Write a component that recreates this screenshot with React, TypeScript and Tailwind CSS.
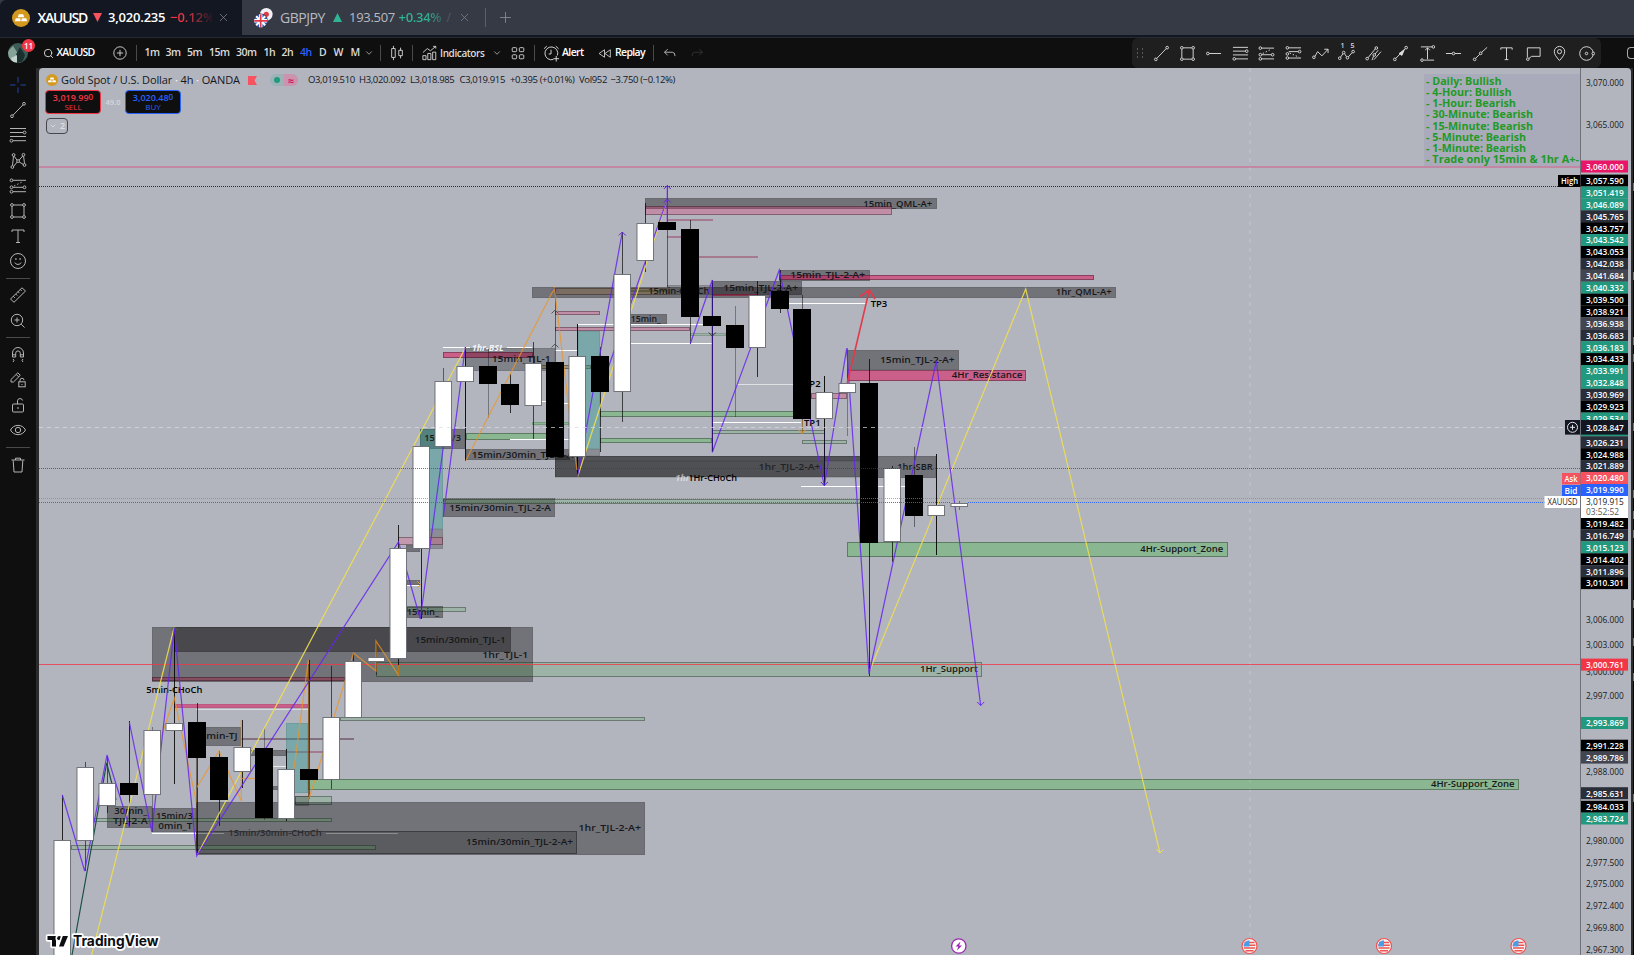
import React from "react";
import { ChevronDown, Search, X, Plus } from "lucide-react";

/* ---------- chart data ---------- */

const GRAY = "rgba(0,0,0,0.36)";
const GREEN = "rgba(70,185,70,0.36)";
const MINT = "rgba(76,175,80,0.2)";
const PINK = "rgba(225,20,90,0.52)";
const ROSE = "rgba(233,30,99,0.26)";
const TEAL = "rgba(38,150,140,0.4)";

type Zone = [number, number, number, number, string, number?];

const zones: Zone[] = [
  [644.5, 198, 936.7, 209, GRAY],
  [644.5, 205.5, 891.5, 214.5, ROSE, 1],
  [667, 218.5, 712.5, 221, ROSE, 1],
  [667, 235.5, 690, 238, ROSE, 1],
  [699, 256, 757.5, 258, ROSE, 1],
  [532.3, 286.5, 1115.7, 298, GRAY],
  [555, 288, 667, 295, "rgba(150,95,40,0.28)", 1],
  [630, 289.5, 667, 291.5, "rgba(60,80,20,0.4)"],
  [667.3, 285, 712, 295, "rgba(0,0,0,0.2)"],
  [712.3, 281, 802.3, 294.7, GRAY],
  [712.3, 293.5, 757, 295, "rgba(160,20,60,0.6)"],
  [779.3, 269.7, 869.7, 281, GRAY],
  [779.3, 274.5, 1093.7, 279.5, PINK, 1],
  [555.3, 310.5, 599.7, 314.5, ROSE, 1],
  [555.3, 327, 690, 330.7, ROSE, 1],
  [630, 314, 667.3, 324, GRAY],
  [443.3, 352.3, 532.7, 357.5, PINK, 1],
  [465.3, 348.3, 555.3, 370.7, "rgba(0,0,0,0.28)"],
  [541, 364.5, 591, 368.5, "rgba(110,90,20,0.35)", 1],
  [577.5, 330.7, 599.7, 449.3, TEAL],
  [585.7, 449, 599.7, 456, "rgba(0,0,0,0.22)"],
  [599.7, 411.3, 794, 417.3, GREEN, 1],
  [712.3, 430.3, 824.7, 433.7, MINT, 1],
  [599.7, 437.7, 712.3, 443, GREEN, 1],
  [690, 332.7, 726, 335.7, MINT, 1],
  [802, 440.3, 847, 444.3, MINT, 1],
  [811, 393.3, 846.7, 399, ROSE, 1],
  [847.3, 370.3, 1026.3, 380.5, PINK, 1],
  [847.3, 350.3, 958.7, 370.3, GRAY],
  [532.3, 421.7, 569, 425.3, GREEN, 1],
  [465.7, 433.3, 546.7, 440, GREEN, 1],
  [420.3, 429.3, 465.3, 449, GRAY],
  [420.3, 429.3, 443.3, 529.3, TEAL],
  [420.3, 529.3, 443.3, 549, "rgba(0,0,0,0.22)"],
  [398.3, 537.3, 443.3, 545, "rgba(233,90,140,0.3)", 1],
  [406, 545, 420.3, 552.3, GRAY],
  [465.7, 449, 570, 460.3, GRAY],
  [555, 456, 936.3, 478.3, GRAY],
  [555, 461, 824, 477, "rgba(0,0,0,0.3)"],
  [555, 456, 861, 461, "rgba(0,0,0,0.28)"],
  [824, 461, 861, 477, "rgba(0,0,0,0.12)"],
  [443.3, 498.3, 555.3, 517, GRAY],
  [443.3, 499.3, 861, 503.7, MINT, 1],
  [846.7, 542.3, 1228, 557.3, GREEN, 1],
  [406.7, 580.3, 420.3, 585.3, GRAY],
  [406.7, 606, 443.3, 618, GRAY],
  [406.7, 607.3, 465.7, 611.7, MINT, 1],
  [174.3, 627.3, 510.7, 651.7, GRAY],
  [152, 627.3, 533, 681.5, GRAY],
  [152, 677.3, 345, 681.3, "rgba(160,20,60,0.4)", 1],
  [376, 662, 981.7, 677.3, MINT, 1],
  [339.7, 717.3, 645, 721.3, MINT, 1],
  [174.3, 704, 308.3, 708, PINK],
  [205.3, 727, 241.3, 746, GRAY],
  [241.3, 738.3, 354, 740.3, "rgba(90,30,60,0.4)"],
  [250, 750.3, 286.3, 756.3, GRAY],
  [286.3, 751.3, 322.7, 753.3, ROSE, 1],
  [286, 723, 308.3, 793.3, TEAL],
  [273, 786, 278, 790, GRAY],
  [308.3, 779.3, 1518.6, 790.3, GREEN, 1],
  [295, 796.3, 331.7, 805.3, MINT, 1],
  [295, 796.3, 308.5, 806, "rgba(0,0,0,0.2)"],
  [196.3, 802, 645, 854.7, GRAY],
  [196.3, 830.5, 577.3, 854, "rgba(0,0,0,0.2)", 1],
  [107.3, 806, 151.8, 827.7, GRAY],
  [152, 808, 196.3, 832.3, GRAY],
  [93.3, 818.3, 331.7, 822.3, MINT, 1],
  [70.7, 845.3, 376, 849.7, MINT, 1],
];

const whiteLines: [number, number, number, number?][] = [
  [443, 470, 347.5], [507, 532, 347.5], [577.5, 704, 324.5], [630.7, 712, 343.5],
  [555, 577.5, 350.5], [541, 555, 401.5], [563, 570, 403.5], [737, 793, 384.5, 0.6],
  [788.7, 867, 303.5], [712.7, 801, 422.5], [510, 569, 439.5], [801, 905, 486.5],
  [555, 861, 477.5, 0.35], [406.7, 420, 585.5], [196, 308, 709.5, 0.5],
  [273, 286, 766.5, 0.7], [152, 196, 833.5], [196, 224, 833.5, 0.3], [326, 398, 833.5, 0.3],
];

/* [x, bodyTop, bodyBottom, up, wickTop, wickBottom, wickAlpha] */
type Candle = [number, number, number, 0 | 1, number, number, number];
const candles: Candle[] = [
  [62, 840, 960, 1, 795, 960, 0.8], [85, 767, 840, 1, 762, 871, 0.6], [107, 783, 805, 1, 756, 813, 0.6],
  [129, 783, 794, 0, 721, 827, 0.8], [152, 730, 794, 1, 727, 832, 0.35], [174, 723, 730, 1, 627, 784, 0.85],
  [197, 722, 757, 0, 703, 855, 0.7], [219, 757, 799, 0, 751, 826, 0.7], [242, 747, 771, 1, 720, 788, 0.8],
  [264, 748, 817, 0, 728, 820, 0.35], [286, 769, 818, 1, 749, 821, 0.8], [309, 769, 779, 0, 660, 799, 0.8],
  [331, 717, 779, 1, 666, 789, 0.6], [353, 661, 717, 1, 653, 717, 0.7], [376, 657, 661, 1, 641, 675, 0.4],
  [398, 548, 658, 1, 525, 675, 0.8], [421, 446, 548, 1, 446, 619, 0.8], [443, 381, 446, 1, 368, 446, 0.5],
  [465, 366, 381, 1, 347, 461, 0.9], [488, 366, 383, 0, 349, 418, 0.35], [510, 384, 404, 0, 374, 413, 0.75],
  [533, 363, 405, 1, 342, 439, 0.65], [555, 362, 456, 0, 288, 457, 0.5], [577, 356, 456, 1, 324, 477, 0.9],
  [600, 356, 391, 0, 347, 452, 0.7], [622, 274, 391, 1, 232, 422, 0.65], [645, 223, 260, 1, 203, 272, 0.7],
  [667, 222, 229, 0, 185, 287, 0.5], [690, 229, 316, 0, 220, 344, 0.6], [712, 316, 325, 0, 280, 452, 0.9],
  [735, 325, 347, 0, 306, 417, 0.35], [757, 295, 347, 1, 281, 377, 0.75], [780, 291, 308, 0, 270, 313, 0.7],
  [802, 309, 418, 0, 295, 433, 0.5], [824, 392, 418, 1, 376, 486, 0.9], [847, 383, 392, 1, 348, 436, 0.35],
  [869, 383, 542, 0, 359, 676, 0.75], [892, 468, 541, 1, 466, 562, 0.7], [914, 475, 515, 0, 447, 527, 0.45],
  [936, 505, 515, 1, 454, 555, 0.9], [959, 503, 506, 1, 501, 510, 0.4],
];

const purple = [
  "62.3,795 84.7,871 107,755 129.3,826.7", "129.3,722 151.8,832 174.3,628 196.7,856 398.5,542 420.3,619 443.3,447",
  "443.3,516.7 465.3,347", "577.5,477 622.3,232", "599.7,392 667.3,199", "667.3,222 667.3,186",
  "690.3,343.7 712.3,280 712.3,452.3 779.3,270 824.3,486 846.7,348.3 869,674 936.3,361 980.7,705.5",
];
const yellow = [
  "91.7,955 174.3,627", "196.7,856 465.3,348", "577.5,477 667.3,199", "870,670 1025.7,289 1160,853",
];
const orange = [
  "160,740 174.3,698 196.5,803", "196.5,788 219,751 241.3,801 241.3,720", "241.3,778.5 256,778.5",
  "294,769 308.3,660 309,799 353.5,653 376,671 376,641 398.5,675 398.5,665",
  "465.7,460.7 554.5,288 569,410 577,470", "802,420 802,433",
];

/* [x, centerY, width, text, color] */
const labels: [number, number, number, string, string?][] = [
  [863.3, 203.3, 69, "15min_QML-A+"], [790.3, 275, 74.7, "15min_TJL-2-A+"], [723.3, 287.5, 74.7, "15min_TJL-2-A+"],
  [1055.7, 291.5, 56, "1hr_QML-A+"], [870.7, 303.5, 16.6, "TP3", "#000"], [804, 383.3, 16.6, "TP2", "#000"],
  [804, 422.7, 16.6, "TP1", "#000"], [880, 360, 74.7, "15min_TJL-2-A+"], [951.7, 375, 70.6, "4Hr_Resistance"],
  [648.3, 290.5, 61, "15min-CHoCh"], [630.7, 318.7, 30, "15min_"], [491.7, 358.7, 59, "15min_TJL-1"],
  [424.3, 438, 36.7, "15min/3"], [471.7, 455, 101.7, "15min/30min_TJL-2-A"], [758.6, 466.7, 62, "1hr_TJL-2-A+", "#222327"],
  [688.3, 477.3, 48.7, "1Hr-CHoCh", "#000"], [449.3, 507.3, 101.7, "15min/30min_TJL-2-A"], [406.7, 611.7, 32.3, "15min_"],
  [414.7, 639.7, 91, "15min/30min_TJL-1"], [482.3, 654.5, 46, "1hr_TJL-1"], [897.3, 467, 35.4, "1hr-SBR"],
  [1140.3, 549, 83, "4Hr-Support_Zone"], [920, 668.5, 57.7, "1Hr_Support"], [1431, 784, 83.6, "4Hr-Support_Zone"],
  [146.3, 690, 56, "5min-CHoCh", "#000"], [206.3, 736, 31.4, "min-TJ"], [114.3, 811, 33, "30min_"],
  [113, 820.7, 34.7, "TJL-2-A"], [156, 816, 36.7, "15min/3"], [158.3, 826, 34, "0min_T"],
  [228.3, 833, 93.4, "15min/30min-CHoCh", "#2b2c30"], [466, 841.5, 107, "15min/30min_TJL-2-A+"], [578.5, 827.5, 62.5, "1hr_TJL-2-A+"],
];

const K = "#000000", N = "#2a2e39", S = "#434651", T = "#22997e";
const tags: [number, string, string][] = [
  [166.5, "3,060.000", "#e91667"], [180.6, "3,057.590", K], [192.5, "3,051.419", T], [204.4, "3,046.089", T],
  [216.3, "3,045.765", N], [228.2, "3,043.757", K], [240.1, "3,043.542", T], [252, "3,043.053", K],
  [263.9, "3,042.038", N], [275.8, "3,041.684", S], [287.7, "3,040.332", T], [299.6, "3,039.500", K],
  [311.5, "3,038.921", K], [323.4, "3,036.938", S], [335.3, "3,036.683", N], [347.2, "3,036.183", T],
  [359.1, "3,034.433", K], [371, "3,033.991", T], [382.9, "3,032.848", T], [394.8, "3,030.969", N],
  [406.7, "3,029.923", K], [418.5, "3,029.534", T], [430.5, "", T], [427.3, "3,028.847", "#131722"],
  [442.3, "3,026.231", N], [454.2, "3,024.988", K], [466.1, "3,021.889", N], [478, "3,020.480", "#f7525f"],
  [490, "3,019.990", "#2962ff"], [523.5, "3,019.482", K], [535.4, "3,016.749", N], [547.3, "3,015.123", T],
  [559.3, "3,014.402", K], [571.2, "3,011.896", N], [583.1, "3,010.301", K], [664.6, "3,000.761", "#f23645"],
  [723, "2,993.869", T], [745.7, "2,991.228", K], [757.6, "2,989.786", S], [793.2, "2,985.631", N],
  [806.8, "2,984.033", K], [818.5, "2,983.724", T],
];
const ticks: [number, string][] = [
  [83, "3,070.000"], [124.5, "3,065.000"], [619.3, "3,006.000"], [644.7, "3,003.000"], [671.5, "3,000.000"],
  [695.5, "2,997.000"], [772, "2,988.000"], [840.6, "2,980.000"], [862.5, "2,977.500"], [883.5, "2,975.000"],
  [906, "2,972.400"], [928, "2,969.800"], [949.3, "2,967.300"],
];

function Arrow({ x, y, dir, color }: { x: number; y: number; dir: 1 | -1; color: string }) {
  return <path d={`M${x - 3.5} ${y - 3.5 * dir}L${x} ${y}L${x + 3.5} ${y - 3.5 * dir}`} fill="none" stroke={color} />;
}

function Flag({ x }: { x: number }) {
  return (
    <g transform={`translate(${x} 946)`}>
      <circle r="7.5" fill="#f4f4f6" stroke="#ef5350" strokeWidth="1.2" />
      <path d="M-5 -3.5H5M-5.8 -0.7H5.8M-5.5 2H5.5M-4 4.7H4" stroke="#ef5350" strokeWidth="1.4" />
      <path d="M0 -5.8V0.4H-5.8A5.8 5.8 0 0 1 0 -5.8Z" fill="#4a9be8" />
    </g>
  );
}

function Chart() {
  return (
    <svg className="block" width="1592" height="887" viewBox="39 68 1592 887" fontFamily='"Open Sans","Noto Sans",sans-serif'>
      <rect x="39" y="68" width="1592" height="887" fill="#b2b5be" />
      <path d="M1250 68V940" stroke="#bfc1c8" strokeWidth="1.5" strokeDasharray="4 5" />
      <rect x="39" y="166" width="1541" height="2" fill="#e91e63" opacity="0.3" />
      <path d="M39 186.5H1580" stroke="#000" strokeOpacity="0.75" strokeDasharray="1 1" />
      <rect x="1424" y="74" width="156" height="92" fill="rgba(130,120,170,0.16)" />
      {["Daily: Bullish", "4-Hour: Bullish", "1-Hour: Bearish", "30-Minute: Bearish", "15-Minute: Bearish", "5-Minute: Bearish", "1-Minute: Bearish", "Trade only 15min & 1hr A+-"].map((t, i) => (
        <text key={t} x="1426" y={84.8 + i * 11.2} fontSize="10.8" fontWeight="700" fill="#229a25" textLength={[75.5, 85.5, 90, 107, 107, 100, 100, 153][i]} lengthAdjust="spacingAndGlyphs">- {t}</text>
      ))}

      {zones.map(([x1, y1, x2, y2, f, b], i) => {
        const x = Math.round(x1), y = Math.round(y1), w = Math.round(x2) - x, h = Math.max(2, Math.round(y2) - y);
        return (
          <g key={i}>
            <rect x={x} y={y} width={w} height={h} fill={f} />
            <rect x={x + 0.5} y={y + 0.5} width={w - 1} height={h - 1} fill="none" stroke="#000" strokeOpacity={b ? (h < 4 ? 0.14 : 0.32) : 0.07} />
          </g>
        );
      })}
      <path d="M39 664.5H1580" stroke="#f23645" strokeOpacity="0.8" />
      {whiteLines.map(([a, b, y, o], i) => <path key={i} d={`M${a} ${y}H${b}`} stroke="#fff" strokeOpacity={o ?? 1} />)}

      {labels.map(([x, y, w, t, c], i) => (
        <text key={i} x={x} y={y + 3.2} fontSize="9" fontWeight="600" fill={c ?? "#17181b"} textLength={w} lengthAdjust="spacingAndGlyphs">{t}</text>
      ))}
      <g fontSize="9" fontWeight="700" fontStyle="italic" fill="#f4f4f6">
        <text x="471.7" y="350.8" textLength="32" lengthAdjust="spacingAndGlyphs">1hr-BSL</text>
        <text x="675.3" y="480.5" fillOpacity="0.6">1hr</text>
      </g>

      {candles.map(([x, , , , a, b, o], i) => <rect key={i} x={x} y={a} width="1" height={b - a} fill="#000" fillOpacity={o} />)}

      <g fill="none" strokeWidth="1.2">
        <path d="M72 955L106.7 763L116 800" stroke="#1c5044" />
        {yellow.map((p) => <polyline key={p} points={p} stroke="#f0de52" strokeOpacity="0.9" />)}
        {orange.map((p) => <polyline key={p} points={p} stroke="#ef9420" strokeOpacity="0.75" />)}
        {purple.map((p) => <polyline key={p} points={p} stroke="#6524f0" strokeOpacity="0.85" />)}
        <path d="M847.3 383L869.3 290M860 296.5L869.3 290L875 299" stroke="#e23a4d" strokeWidth="1.6" />
      </g>
      <rect x="712" y="283" width="1" height="168" fill="#1d0a50" fillOpacity="0.6" />
      <rect x="824" y="430" width="1" height="54" fill="#1d0a50" fillOpacity="0.5" />
      <rect x="308" y="664" width="1" height="133" fill="#2a1800" fillOpacity="0.5" />
      <rect x="196" y="757" width="1" height="94" fill="#2a1800" fillOpacity="0.5" />
      <Arrow x={622.3} y={232} dir={-1} color="#5b2bd0" />
      <Arrow x={667.3} y={199} dir={-1} color="#5b2bd0" />
      <Arrow x={667.3} y={185.5} dir={-1} color="#5b2bd0" />
      <Arrow x={554.5} y={288} dir={-1} color="#704a9a" />
      <Arrow x={824.3} y={485.5} dir={1} color="#5b2bd0" />
      <Arrow x={980.7} y={705.5} dir={1} color="#6c2bee" />
      <Arrow x={1160} y={853} dir={1} color="#f0de52" />
      <Arrow x={802} y={433.5} dir={1} color="#ef9420" />
      <Arrow x={174.3} y={627} dir={-1} color="#4a6a30" />
      <Arrow x={712.3} y={336} dir={1} color="#333" />
      <Arrow x={555} y={344} dir={-1} color="#555" />
      <Arrow x={555} y={310} dir={-1} color="#555" />
      <path d="M417 581L420.5 584.5L417 588" fill="none" stroke="#ef9420" />

      {candles.map(([x, t, b, up], i) =>
        up ? (
          <rect key={i} x={x - 8} y={t + 0.5} width="16.5" height={Math.max(b - t, 3)} fill="#fff" stroke="#666870" strokeOpacity="0.9" />
        ) : (
          <rect key={i} x={x - 9} y={t} width="18" height={b - t + 1} fill="#000" />
        ),
      )}

      <path d="M39 468.5H1580" stroke="#3b3c41" strokeOpacity="0.7" strokeDasharray="1 1" />
      <path d="M39 498.5H1580" stroke="#f7525f" strokeOpacity="0.7" strokeDasharray="1 1" />
      <path d="M39 502.5H950M968 502.5H1580" stroke="#2962ff" strokeOpacity="0.9" strokeDasharray="1 1" />
      <path d="M39 427.5H1580" stroke="#dcdde2" strokeOpacity="0.7" strokeDasharray="4 4" />

      {/* price scale */}
      <path d="M1580.5 68V955" stroke="#6f7178" />
      <g fontSize="9">
        {ticks.map(([y, t]) => <text key={t} x="1586" y={y + 3.3} fill="#17181b" textLength="37.7" lengthAdjust="spacingAndGlyphs">{t}</text>)}
        {tags.map(([y, t, c], i) => {
          const tall = t === "3,028.847";
          return (
            <g key={i}>
              <rect x="1581" y={y - (tall ? 7.3 : 6)} width="47" height={tall ? 14.6 : 12} fill={c} />
              <text x="1586" y={y + 3.3} fill="#fff" fontWeight={600} textLength="37.7" lengthAdjust="spacingAndGlyphs">{t}</text>
            </g>
          );
        })}
        <rect x="1558" y="175" width="22.5" height="12" fill="#000" />
        <text x="1561" y="184" fill="#fff" fontWeight="600" textLength="17" lengthAdjust="spacingAndGlyphs">High</text>
        <rect x="1562" y="473" width="18.5" height="11.5" fill="#f7525f" />
        <text x="1564.5" y="481.6" fill="#fff" fontWeight="600" textLength="13" lengthAdjust="spacingAndGlyphs">Ask</text>
        <rect x="1562" y="485" width="18.5" height="11" fill="#2962ff" />
        <text x="1564.5" y="493.7" fill="#fff" fontWeight="600" textLength="13" lengthAdjust="spacingAndGlyphs">Bid</text>
        <rect x="1544.5" y="496" width="35.5" height="12" fill="#fff" />
        <text x="1547.5" y="505.4" fill="#222" textLength="30" lengthAdjust="spacingAndGlyphs">XAUUSD</text>
        <rect x="1581" y="496" width="47" height="22" fill="#fff" />
        <text x="1586" y="505.2" fill="#222" textLength="37.7" lengthAdjust="spacingAndGlyphs">3,019.915</text>
        <text x="1586" y="514.8" fill="#555" textLength="33" lengthAdjust="spacingAndGlyphs">03:52:52</text>
      </g>
      <rect x="1565" y="420" width="15" height="14.6" fill="#131722" />
      <circle cx="1572.5" cy="427.3" r="5" fill="none" stroke="#e4e5ea" />
      <path d="M1570 427.3H1575M1572.5 424.8V429.8" stroke="#e4e5ea" />

      {/* events */}
      <circle cx="958.8" cy="946" r="7.2" fill="#fff" stroke="#9c27b0" strokeWidth="1.3" />
      <path d="M960.5 941.5L955.5 946.6H958.3L957 950.5L962 945.4H959.2Z" fill="#9c27b0" />
      <Flag x={1249.5} />
      <Flag x={1384} />
      <Flag x={1518.5} />

      {/* brand */}
      <g stroke="#fff" strokeWidth="3.5" strokeLinejoin="round" paintOrder="stroke" fill="#0c0d10">
        <path d="M47.5 936H56V946.5H52V940H47.5Z" />
        <circle cx="59.3" cy="938.2" r="2.1" />
        <path d="M62.8 936H68L63.6 946.5H59Z" />
        <text x="73" y="946" fontFamily='"Inter",sans-serif' fontWeight="700" fontSize="14.2" textLength="85.5" lengthAdjust="spacingAndGlyphs">TradingView</text>
      </g>
    </svg>
  );
}

/* ---------- icons ---------- */

function Ico({ children, className = "", s = 18 }: { children: React.ReactNode; className?: string; s?: number }) {
  return (
    <svg className={"shrink-0 " + className} width={s} height={s} viewBox="0 0 18 18" fill="none" stroke="currentColor" strokeWidth="1">
      {children}
    </svg>
  );
}
const Dot = ({ x, y }: { x: number; y: number }) => <circle cx={x} cy={y} r="1.4" />;

const icons: Record<string, React.ReactNode> = {
  cross: <path d="M9 1V6.5M9 11.5V17M1 9H6.5M11.5 9H17" />,
  line: <><path d="M4 14.2L14 3.8" /><Dot x={3} y={15.2} /><Dot x={15} y={2.8} /></>,
  rect: <><path d="M4.5 3H13.5M4.5 15H13.5M3 4.5V13.5M15 4.5V13.5" /><Dot x={3} y={3} /><Dot x={15} y={3} /><Dot x={3} y={15} /><Dot x={15} y={15} /></>,
  hray: <><path d="M4.4 9H17" /><Dot x={3} y={9} /></>,
  fib: <><path d="M1 2.5H17M1 6.5H14M1 10.5H17M4 14.7H17" /><Dot x={15.6} y={6.5} /><Dot x={2.4} y={14.7} /></>,
  ext: <><path d="M4 3.3H17M4 10.3H14M4 14.7H17" /><path d="M5 9L14 4.5" strokeDasharray="1.5 2" /><Dot x={2.5} y={3.3} /><Dot x={2.5} y={10.3} /><Dot x={15.5} y={10.3} /><Dot x={2.5} y={14.7} /></>,
  ext2: <><path d="M4 3H17M4 7H14M4 13.8H17" /><path d="M5 8.5L15 13" strokeDasharray="1.5 2" /><Dot x={2.5} y={3} /><Dot x={2.5} y={9.4} /><Dot x={15.5} y={7} /><Dot x={2.5} y={13.8} /></>,
  pattern: <><path d="M3.5 13.5L4.5 4.3M5.3 4.3L8 8.2M10 8.2L13.8 4M14.6 4.3L15.5 11.5M4.5 14.5L8.2 10M10.2 10L14.5 12.5" /><Dot x={4.6} y={3} /><Dot x={14.5} y={2.8} /><Dot x={9.1} y={9.1} /><Dot x={3.4} y={15} /><Dot x={15.5} y={13} /></>,
  text: <path d="M3 5V3H15V5M9 3V15.5M7 15.5H11" />,
  smile: <><circle cx="9" cy="9" r="7.5" /><path d="M5.8 10.5C6.8 13 11.2 13 12.2 10.5" /><path d="M6.2 7H7.6M10.4 7H11.8" strokeWidth="1.4" /></>,
  ruler: <path d="M1.5 13L13 1.8L16.5 5L5 16.3ZM4.3 10.3L5.8 11.8M6.7 8L8.2 9.5M9 5.7L10.5 7.2M11.3 3.5L12.8 5" />,
  zoom: <><circle cx="8" cy="8" r="5.7" /><path d="M12.2 12.2L15.5 15.5M8 5.5V10.5M5.5 8H10.5" /></>,
  magnet: <path d="M3.5 11V7A5.5 5.5 0 0 1 14.5 7V11H11.3V7.2A2.3 2.3 0 0 0 6.7 7.2V11ZM3.5 8.8H6.7M11.3 8.8H14.5M4 13L5 14.3L4 16M14 13L13 14.3L14 16" />,
  pencil: <><path d="M2 8.5L8.8 1.8L11.3 4.3L4.5 11H2ZM7.2 3.4L9.7 5.9" /><rect x="9.8" y="10.8" width="6.4" height="5" /><path d="M11 10.8V9.3A2 2 0 0 1 15 9.2M13 13V14" /></>,
  lock: <><rect x="3.5" y="8" width="11" height="8" rx="1" /><path d="M8.5 8V4.8A2.6 2.6 0 0 1 13.6 4.5M9 11V13" /></>,
  eye: <><path d="M1.5 9C4.5 2.8 13.5 2.8 16.5 9C13.5 15.2 4.5 15.2 1.5 9Z" /><circle cx="9" cy="9" r="2.7" /></>,
  trash: <path d="M2.5 4H15.5M6.5 4V2.2H11.5V4M4.2 4.5L5 16H13L13.8 4.5" />,
  zig: <><path d="M3 12.2L6 7L10.5 11.5L17 4.5M13 4.5H17V8.5" /><Dot x={2} y={13} /></>,
  elliott: <><path d="M2.8 12.8L5.2 9.2M7 9.2L9 12.4M11 12.6L14.8 8.2" /><Dot x={1.8} y={14} /><Dot x={6} y={8} /><Dot x={10} y={13.5} /><Dot x={16} y={7} /></>,
  channel: <><path d="M3.2 13.5L11 4M7.5 16L9 11.8M9.5 15.5L17 7M10.6 9.6L14 5.5" /><Dot x={2.3} y={14.4} /><Dot x={12} y={3.2} /><Dot x={9.8} y={10.5} /></>,
  arrow: <><path d="M4 14.2L14 3.8" /><path d="M13 5L7.5 9L10.5 11Z" fill="currentColor" /><Dot x={3} y={15.2} /><Dot x={15} y={2.8} /></>,
  range: <><path d="M2 2H14M5 16H16M9 3V15M6.5 5.5L9 3L11.5 5.5" /><Dot x={15.2} y={2} /><Dot x={3.2} y={16} /></>,
  hline: <><path d="M1 9H7.5M10.5 9H17" /><Dot x={9} y={9} /></>,
  info: <><path d="M4 14L8.2 9.8M10.2 7.8L16 2.5" /><Dot x={2.8} y={15.2} /><Dot x={9.2} y={8.8} /></>,
  callout: <><path d="M2.5 13V3H16V12H7L4.2 14.2" /><Dot x={3} y={15} /></>,
  pin: <><path d="M9 16.5C5.5 12.5 3.5 10 3.5 7A5.5 5.5 0 0 1 14.5 7C14.5 10 12.5 12.5 9 16.5Z" /><circle cx="9" cy="7" r="2.2" /></>,
  circ: <><circle cx="9" cy="9" r="7.2" /><circle cx="9" cy="9" r="1.3" /><circle cx="16.2" cy="9" r="1.4" fill="#1f1f1f" /></>,
};

function Gold({ s }: { s: number }) {
  return (
    <svg className="shrink-0" width={s} height={s} viewBox="0 0 18 18">
      <circle cx="9" cy="9" r="9" fill="#d39a1f" />
      <path d="M6.8 5.2H11.2L12.2 8.2H5.8ZM3.8 9.2H8.2L8.8 12.3H2.8ZM9.8 9.2H14.2L15.2 12.3H9.2Z" fill="#fff" />
    </svg>
  );
}

const Sep = ({ className = "" }: { className?: string }) => <div className={"h-4 w-px shrink-0 bg-[#4a4a4a] " + className} />;

/* ---------- page ---------- */

function Tabs() {
  return (
    <header className="flex h-[38px] flex-col bg-[#131722]">
      <div className="flex h-[35px] w-full bg-[#363a45]">
        <div className="flex w-[242px] shrink-0 items-center rounded-tl-md bg-[#131722] pl-3 text-white">
          <Gold s={18} />
          <span className="ml-[7.5px] w-[55.5px] text-[14px] tracking-[-1.2px] font-semibold">XAUUSD</span>
          <svg className="shrink-0" width="9" height="9"><path d="M0 0H9L4.5 9Z" fill="#f7525f" /></svg>
          <span className="ml-[6px] w-[62px] text-[13px] tracking-[-0.2px] font-semibold">3,020.235</span>
          <span className="w-[42px] overflow-hidden bg-gradient-to-r from-[#f23645] from-30% to-[#2a1a26] bg-clip-text text-[13px] font-semibold text-transparent">−0.12%</span>
          <X className="ml-[4.5px] shrink-0 text-[#8a8d96]" size={13} strokeWidth={1.3} />
        </div>
        <div className="flex items-center pl-3 text-[#b8bac2]">
          <svg className="shrink-0" width="19" height="20" viewBox="0 0 19 20">
            <circle cx="12.3" cy="6.3" r="6.3" fill="#f0f1f4" />
            <circle cx="12.3" cy="6.3" r="2.6" fill="#e0394a" />
            <circle cx="6.7" cy="12.8" r="7.2" fill="#363a45" />
            <circle cx="6.7" cy="12.8" r="6.5" fill="#2f5fc4" />
            <path d="M2.2 8.3L11.2 17.3M11.2 8.3L2.2 17.3" stroke="#fff" strokeWidth="2" />
            <path d="M6.7 6.3V19.3M.2 12.8H13.2" stroke="#fff" strokeWidth="3.4" />
            <path d="M6.7 6.3V19.3M.2 12.8H13.2" stroke="#e0394a" strokeWidth="1.7" />
          </svg>
          <span className="ml-[7px] w-[53px] text-[14px] tracking-[-0.45px]">GBPJPY</span>
          <svg className="shrink-0" width="9" height="9"><path d="M0 9H9L4.5 0Z" fill="#2fb592" /></svg>
          <span className="ml-[7px] w-[49.5px] text-[13px] tracking-[-0.3px]">193.507</span>
          <span className="w-[44px] bg-gradient-to-r from-[#2fb592] from-60% to-[#35635f] bg-clip-text text-[13px] tracking-[-0.3px] font-semibold text-transparent">+0.34%</span>
          <span className="ml-1 text-[12px] text-[#555964]">/</span>
          <X className="ml-[7.5px] shrink-0 text-[#858892]" size={13} strokeWidth={1.3} />
          <div className="ml-[14px] h-[19px] w-px bg-[#5c606b]" />
          <Plus className="ml-[11px] text-[#90939c]" size={17} strokeWidth={1.1} />
        </div>
      </div>
      <div className="mt-auto h-px bg-[#262a35]" />
    </header>
  );
}

const frames: [string, string][] = [
  ["1m", "w-[21px]"], ["3m", "w-[21.5px]"], ["5m", "w-[22px]"], ["15m", "w-[27px]"], ["30m", "w-[27.5px]"],
  ["1h", "w-[18px]"], ["2h", "w-[18.5px]"], ["4h", "w-[19px]"], ["D", "w-[14.5px]"], ["W", "w-[17px]"], ["M", "w-[14px]"],
];
const drawTools: [string, string][] = [
  ["line", "w-[26px]"], ["rect", "w-[26.5px]"], ["hray", "w-[26.5px]"], ["fib", "w-[26.5px]"], ["ext", "w-[26px]"], ["ext2", "w-[27px]"],
  ["zig", "w-[27px]"], ["elliott", "w-[26.5px]"], ["channel", "w-[27px]"], ["arrow", "w-[26.5px]"], ["range", "w-[27px]"], ["hline", "w-[26.5px]"],
  ["info", "w-[26.5px]"], ["text", "w-[26.5px]"], ["callout", "w-[26.5px]"], ["pin", "w-[26.5px]"], ["circ", "w-[26.5px]"],
];

function Toolbar() {
  return (
    <div className="flex h-[30px] items-center bg-[#0f0f0f] text-[11px] font-semibold text-[#dbdbdb]">
      <div className="relative ml-2 h-5 w-5 shrink-0">
        <svg className="rounded-full" width="20" height="20">
          <rect width="20" height="20" fill="#3d5c55" />
          <path d="M0 8L5 3L9 9L7 20H0ZM12 6L15 20H10Z" fill="#86a39a" />
          <path d="M8 12L12 4L17 12L14 20H8Z" fill="#1c2f2f" />
          <path d="M3 15L9 12V20H4Z" fill="#c4d3cb" />
        </svg>
        <span className="absolute -top-[4px] left-[14px] flex h-[13px] w-[13px] items-center justify-center rounded-full bg-[#f23645] text-[8px] leading-none text-white">11</span>
      </div>
      <Search className="ml-[15px] shrink-0" size={11} strokeWidth={2} />
      <span className="ml-[2.5px] w-[55px] text-[10.5px] tracking-[-0.75px] text-white">XAUUSD</span>
      <Ico s={16}><circle cx="9" cy="9" r="7" /><path d="M9 5.5V12.5M5.5 9H12.5" /></Ico>
      <Sep className="ml-[8px]" />
      <div className="ml-[8px] flex text-[10.5px] tracking-[-0.5px]">
        {frames.map(([t, w]) => <span key={t} className={w + " shrink-0 " + (t === "4h" ? "text-[#2962ff]" : "")}>{t}</span>)}
      </div>
      <ChevronDown className="ml-[-0.5px] shrink-0" size={10} strokeWidth={1.6} />
      <Sep className="ml-[5.5px]" />
      <Ico className="ml-[8px]" s={16}><path d="M3 4H7V14H3ZM5 1V4M5 14V17M11 6H15V12H11ZM13 3V6M13 12V15" /></Ico>
      <Sep className="ml-[7px]" />
      <Ico className="ml-[9.5px]" s={16}><path d="M1 16.5V12H4.5V16.5ZM6.5 16.5V9.5H10V16.5ZM12 16.5V8H15.5V16.5ZM1 8.5L6 4L9.5 6.5L15.5 1.5M12.5 1.5H15.5V4" /></Ico>
      <span className="ml-[2px] w-[52px] shrink-0 text-[10px] tracking-[-0.4px]">Indicators</span>
      <ChevronDown className="shrink-0" size={10} strokeWidth={1.6} />
      <Ico className="ml-[8px]" s={16}><rect x="2.5" y="3" width="5" height="4.5" rx="1" /><rect x="10.5" y="3" width="5" height="4.5" rx="1" /><rect x="2.5" y="11" width="5" height="4.5" rx="1" /><rect x="10.5" y="11" width="5" height="4.5" rx="1" /></Ico>
      <Sep className="ml-[8px]" />
      <Ico className="ml-[8px]" s={17}><path d="M11 15.3A6.8 6.8 0 1 1 15.3 11M8.5 5V9.5H6M1 4L4 1.2M13.5 1.2L16.5 4M14 11.5V17.5M11 14.5H17" /></Ico>
      <span className="ml-[2px] w-[35px] text-[10.5px] tracking-[-0.6px] text-white">Alert</span>
      <Ico s={15}><path d="M9 4.5V13.5L2.5 9ZM16 4.5V13.5L9.5 9Z" /></Ico>
      <span className="ml-[3px] w-[34px] text-[10.5px] tracking-[-0.65px] text-white">Replay</span>
      <Sep className="ml-[4px]" />
      <Ico className="ml-[9px]" s={14}><path d="M6 4L2 8L6 12M2 8H12Q15.5 8 15.5 13" /></Ico>
      <Ico className="ml-[13px] text-[#3a3a3a]" s={14}><path d="M12 4L16 8L12 12M16 8H6Q2.5 8 2.5 13" /></Ico>
      <div className="ml-auto mr-[33px] flex h-[30px] w-[469px] shrink-0 items-center rounded-md bg-[#1f1f1f] pl-1">
        <svg className="mr-[3px] shrink-0" width="9" height="10" fill="#5a5a5a"><path d="M1 0h1v2H1zM6 0h1v2H6zM1 4h1v2H1zM6 4h1v2H6zM1 8h1v2H1zM6 8h1v2H6z" /></svg>
        {drawTools.map(([k, w]) => (
          <span key={k} className={w + " relative flex shrink-0 justify-center"}>
            <Ico s={17}>{icons[k]}</Ico>
            {k === "elliott" && <span className="absolute -top-[3px] left-[7px] flex gap-[6px] text-[7px] leading-none"><i className="not-italic">1</i><i className="not-italic">5</i></span>}
          </span>
        ))}
      </div>
      <div className="absolute right-0 top-[47px] h-3 w-[7px] rounded-l-sm border border-r-0 border-[#aaa]" />
    </div>
  );
}

function SideGroup({ names }: { names: string[] }) {
  return (
    <>
      {names.map((n) => (
        <div key={n} className={"flex h-[25.2px] items-center justify-center " + (n === "cross" ? "text-[#2146a8]" : "text-[#b4b4b4]")}>
          <Ico s={18}>{icons[n]}</Ico>
        </div>
      ))}
    </>
  );
}
const Rule = () => <div className="mx-[6px] my-[4px] h-px bg-[#4a4a4a]" />;

function Legend() {
  return (
    <div className="absolute left-[6px] top-[4px] text-[#131722]">
      <div className="flex h-4 items-center">
        <div className="ml-px"><Gold s={12} /></div>
        <span className="ml-[3px] w-[187px] whitespace-nowrap text-[11px] tracking-[-0.1px]">Gold Spot / U.S. Dollar <span className="text-white">·</span> 4h <span className="text-white">·</span> OANDA</span>
        <svg className="shrink-0" width="9" height="9"><path d="M0 0H9L6.5 4.5L9 9H0Z" fill="#f7525f" /></svg>
        <div className="ml-[13px] flex h-3 w-7 shrink-0 overflow-hidden rounded-full">
          <span className="flex w-1/2 items-center justify-center bg-[#9bb2b6]"><i className="h-[6px] w-[6px] rounded-full bg-[#22997e]" /></span>
          <span className="flex w-1/2 items-center justify-center bg-[#cb93ae] text-[11px] font-bold leading-none text-[#d81b60]">≈</span>
        </div>
        <div className="ml-[10px] flex whitespace-nowrap text-[9.5px] tracking-[-0.35px]">
          <span className="w-[51px]">O3,019.510</span>
          <span className="w-[51px]">H3,020.092</span>
          <span className="w-[49.5px]">L3,018.985</span>
          <span className="w-[50.5px]">C3,019.915</span>
          <span className="w-[69px]">+0.395 (+0.01%)</span>
          <span className="w-[31.5px]">Vol952</span>
          <span>−3.750 (−0.12%)</span>
        </div>
      </div>
      <div className="mt-[2px] flex h-6 items-center text-center text-[9px] font-semibold leading-[9px]">
        <div className="flex h-6 w-14 flex-col justify-center rounded border border-[#f23645] bg-[#0f0f0f] text-[#f23645]"><span className="flex items-start justify-center">3,019.99<span className="text-[8px] leading-[7px]">0</span></span><span className="text-[8px] font-normal">SELL</span></div>
        <span className="w-6 text-[7.5px] text-[#d5d7dd]">49.0</span>
        <div className="flex h-6 w-14 flex-col justify-center rounded border border-[#2962ff] bg-[#0f0f0f] text-[#2962ff]"><span className="flex items-start justify-center">3,020.48<span className="text-[8px] leading-[7px]">0</span></span><span className="text-[8px] font-normal">BUY</span></div>
      </div>
      <div className="ml-px mt-[4px] flex h-4 w-[22px] items-center justify-center gap-[3px] rounded-sm border border-[#46474c] text-[9px] font-semibold text-[#dfe0e5]">
        <ChevronDown className="shrink-0" size={8} strokeWidth={2.4} />2
      </div>
    </div>
  );
}

export default function App() {
  return (
    <div className='relative flex h-[955px] w-[1634px] flex-col overflow-hidden bg-[#2b2b2b] font-["Open_Sans","Noto_Sans",sans-serif]'>
      <Tabs />
      <Toolbar />
      <div className="flex h-[887px]">
        <aside className="w-9 shrink-0 bg-[#0f0f0f] pt-[4.4px]">
          <SideGroup names={["cross", "line", "fib", "pattern", "ext", "rect", "text", "smile"]} />
          <Rule />
          <SideGroup names={["ruler", "zoom"]} />
          <Rule />
          <SideGroup names={["magnet", "pencil", "lock", "eye"]} />
          <Rule />
          <SideGroup names={["trash"]} />
        </aside>
        <main className="relative ml-[3px] w-[1592px] shrink-0 overflow-hidden rounded-t-[4px]">
          <Chart />
          <Legend />
        </main>
        <svg className="ml-[2px] shrink-0" width="1" height="887">
          <rect width="1" height="887" fill="#050505" />
          {[115, 204, 269, 286, 355, 422, 443, 462, 532, 570, 605, 726].map((y) => <rect key={y} y={y} width="1" height="8" fill="#d8484f" />)}
        </svg>
      </div>
    </div>
  );
}
